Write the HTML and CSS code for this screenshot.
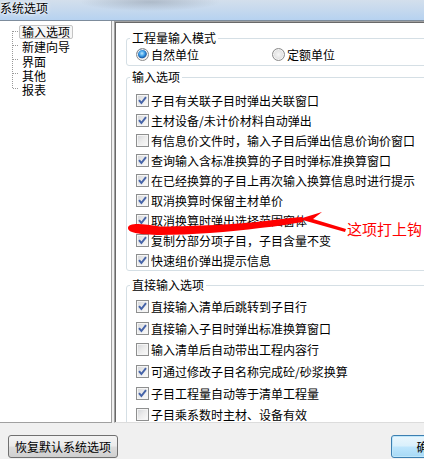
FILE: index.html
```html
<!DOCTYPE html>
<html lang="zh-CN">
<head>
    <meta charset="UTF-8">
    <title>系统选项</title>
    <link rel="stylesheet" href="styles.css">
</head>
<body>
    <div class="window">
        <div class="titlebar"><span class="title">系统选项</span></div>
        <div class="client">
            <div class="panes">
                <div class="tree">
                    <svg class="tree-lines" width="19" height="72" viewBox="0 0 19 72">
                        <g stroke="#9a9a9a" stroke-width="1" stroke-dasharray="1 1">
                            <line x1="12.5" y1="7" x2="12.5" y2="65"/>
                            <line x1="13" y1="7.5" x2="19" y2="7.5"/>
                            <line x1="13" y1="21.5" x2="19" y2="21.5"/>
                            <line x1="13" y1="35.5" x2="19" y2="35.5"/>
                            <line x1="13" y1="49.5" x2="19" y2="49.5"/>
                            <line x1="13" y1="64.5" x2="19" y2="64.5"/>
                        </g>
                    </svg>
                    <ul class="tree-list">
                        <li class="tree-item selected">输入选项</li>
                        <li class="tree-item">新建向导</li>
                        <li class="tree-item">界面</li>
                        <li class="tree-item">其他</li>
                        <li class="tree-item">报表</li>
                    </ul>
                </div>

                <div class="options">
                    <fieldset class="group">
                        <legend>工程量输入模式</legend>
                        <div class="radios">
                            <label class="radio-item"><span class="radio on"></span>自然单位</label>
                            <label class="radio-item"><span class="radio"></span>定额单位</label>
                        </div>
                    </fieldset>

                    <fieldset class="group group-input">
                        <legend>输入选项</legend>
                        <label class="opt"><span class="check"><svg viewBox="0 0 11 11"><path d="M2 5.2 L4.4 8 L9 2.2"/></svg></span>子目有关联子目时弹出关联窗口</label>
                        <label class="opt"><span class="check"><svg viewBox="0 0 11 11"><path d="M2 5.2 L4.4 8 L9 2.2"/></svg></span>主材设备/未计价材料自动弹出</label>
                        <label class="opt"><span class="check"></span>有信息价文件时，输入子目后弹出信息价询价窗口</label>
                        <label class="opt"><span class="check"><svg viewBox="0 0 11 11"><path d="M2 5.2 L4.4 8 L9 2.2"/></svg></span>查询输入含标准换算的子目时弹标准换算窗口</label>
                        <label class="opt"><span class="check"><svg viewBox="0 0 11 11"><path d="M2 5.2 L4.4 8 L9 2.2"/></svg></span>在已经换算的子目上再次输入换算信息时进行提示</label>
                        <label class="opt"><span class="check"><svg viewBox="0 0 11 11"><path d="M2 5.2 L4.4 8 L9 2.2"/></svg></span>取消换算时保留主材单价</label>
                        <label class="opt"><span class="check"><svg viewBox="0 0 11 11"><path d="M2 5.2 L4.4 8 L9 2.2"/></svg></span>取消换算时弹出选择范围窗体</label>
                        <label class="opt"><span class="check"><svg viewBox="0 0 11 11"><path d="M2 5.2 L4.4 8 L9 2.2"/></svg></span>复制分部分项子目，子目含量不变</label>
                        <label class="opt"><span class="check"><svg viewBox="0 0 11 11"><path d="M2 5.2 L4.4 8 L9 2.2"/></svg></span>快速组价弹出提示信息</label>
                    </fieldset>

                    <fieldset class="group group-direct">
                        <legend>直接输入选项</legend>
                        <label class="opt"><span class="check"><svg viewBox="0 0 11 11"><path d="M2 5.2 L4.4 8 L9 2.2"/></svg></span>直接输入清单后跳转到子目行</label>
                        <label class="opt"><span class="check"><svg viewBox="0 0 11 11"><path d="M2 5.2 L4.4 8 L9 2.2"/></svg></span>直接输入子目时弹出标准换算窗口</label>
                        <label class="opt"><span class="check"></span>输入清单后自动带出工程内容行</label>
                        <label class="opt"><span class="check"><svg viewBox="0 0 11 11"><path d="M2 5.2 L4.4 8 L9 2.2"/></svg></span>可通过修改子目名称完成砼/砂浆换算</label>
                        <label class="opt"><span class="check"><svg viewBox="0 0 11 11"><path d="M2 5.2 L4.4 8 L9 2.2"/></svg></span>子目工程量自动等于清单工程量</label>
                        <label class="opt"><span class="check"></span>子目乘系数时主材、设备有效</label>
                    </fieldset>
                </div>
            </div>

            <div class="footer">
                <button class="btn">恢复默认系统选项</button>
                <button class="btn btn-default">确定</button>
            </div>
        </div>

        <!-- red hand-drawn note over the dialog -->
        <svg class="annotation" width="424" height="459" viewBox="0 0 424 459">
            <path fill="#f00" d="M128,228 C128,223 140,223 160,226.5 C185,226.5 230,225 260,221.5 C280,219.5 292,217.5 302,217 L303,222 C285,225 272,227 260,228 C230,232 190,235 160,235 C140,234.5 128,233 128,228 Z"/>
            <path fill="#f00" d="M299,219 L322,212 L313,219 L346,229 L345,232 Z"/>
        </svg>
        <span class="note">这项打上钩</span>
    </div>
</body>
</html>
```

FILE: styles.css
```css
html, body {
    margin: 0;
    overflow: hidden;
}

body {
    width: 424px;
    height: 459px;
    background: #f0f0f0;
    font-family: "Noto Sans CJK SC", "Liberation Sans", sans-serif;
    font-size: 12px;
    color: #000;
}

.window {
    position: relative;
    width: 480px;
    height: 459px;
}

.titlebar {
    height: 20px;
    border-bottom: 1px solid #7d8c9c;
    background:
        radial-gradient(ellipse 70px 9px at 150px 2px, rgba(110, 120, 135, 0.35), transparent),
        linear-gradient(180deg, #d3dfec 0%, #c4d8ee 55%, #b6d2f0 100%);
}

.title {
    display: block;
    line-height: 16px;
    text-shadow: 0 0 5px #fff, 0 0 3px #fff;
}

.client {
    display: flex;
    flex-direction: column;
}

.panes {
    display: flex;
    height: 402px;
}

/* left tree */
.tree {
    display: flex;
    align-items: flex-start;
    width: 111px;
    padding-top: 3px;
    background: #fff;
    border-right: 1px solid #a0a0a0;
    border-bottom: 1px solid #a0a0a0;
}

.tree-lines {
    flex: none;
}

.tree-list {
    list-style: none;
    margin: 0;
    padding: 0;
}

.tree-item {
    height: 14.25px;
    line-height: 14px;
    padding-left: 3px;
    white-space: nowrap;
}

.tree-item.selected {
    height: 12.25px;
    line-height: 12px;
    padding: 0 2px;
    margin-top: 1px;
    margin-bottom: 1px;
    border: 1px solid #c4c4c4;
    border-radius: 2px;
    background: #f6f6f6;
}

/* right options panel */
.options {
    flex: 1;
    margin-left: 2px;
    padding: 9px 0 0 11px;
    background: #fff;
    border-top: 1px solid #a0a0a0;
    border-left: 1px solid #a0a0a0;
    border-bottom: 1px solid #dcdcdc;
    box-shadow: inset 1px 1px 0 #696969;
    overflow: hidden;
}

.group {
    margin: 0;
    padding: 0 0 0 3px;
    border: 1px solid #d5dfe5;
    border-radius: 3px;
}

.group legend {
    padding: 0 2px;
    line-height: 14px;
}

.group + .group {
    margin-top: 4px;
}

.group.group-direct {
    margin-top: 7px;
    padding-top: 4px;
}

.group-input {
    padding-top: 6px;
}

.radios {
    display: flex;
    height: 16px;
    align-items: center;
    padding: 1px 0 3px 6px;
}

.radio-item {
    display: flex;
    align-items: center;
    gap: 2px;
    width: 136px;
}

.radio {
    width: 11px;
    height: 11px;
    border: 1px solid #8b8b8b;
    border-radius: 50%;
    background: radial-gradient(circle at 50% 50%, #f6f6f6 0%, #dedede 70%, #cfcfcf 100%);
    box-shadow: inset 0 0 0 1px #f4f4f4;
}

.radio.on {
    background: radial-gradient(circle at 45% 40%, #bde9ff 0%, #3d9ee6 30%, #1a5da8 50%, #e8e8e8 60%, #f4f4f4 100%);
}

.opt {
    display: flex;
    align-items: center;
    gap: 2px;
    height: 20px;
    padding-left: 6px;
    white-space: nowrap;
}

.group-direct .opt {
    height: 21.6px;
}

.check {
    flex: none;
    width: 11px;
    height: 11px;
    border: 1px solid #8e8f8f;
    background: linear-gradient(135deg, #d2d4d8 0%, #ececec 50%, #fbfbfb 100%);
    box-shadow: inset 0 0 0 1px #f5f5f5;
}

.check svg {
    display: block;
    width: 11px;
    height: 11px;
    fill: none;
    stroke: #4563a8;
    stroke-width: 2;
}

/* bottom buttons */
.footer {
    display: flex;
    padding: 12px 0 0 8px;
}

.btn {
    width: 110px;
    height: 23px;
    padding: 0;
    border: 1px solid #707070;
    border-radius: 3px;
    background: linear-gradient(180deg, #f3f3f3 0%, #ebebeb 48%, #dddddd 52%, #cfcfcf 100%);
    font-family: inherit;
    font-size: 12px;
    color: #000;
}

.btn-default {
    width: 75px;
    margin-left: 273px;
    border-color: #3c7fb1;
    background: linear-gradient(180deg, #eaf6fd 0%, #d9f0fc 48%, #bee6fd 52%, #a7d9f5 100%);
    box-shadow: inset 0 0 0 1px #bfe7fb;
}

/* annotation overlay */
.annotation {
    position: absolute;
    top: 0;
    left: 0;
    pointer-events: none;
}

.note {
    position: absolute;
    left: 347px;
    top: 220px;
    font-size: 15px;
    line-height: 18px;
    color: #f00;
    white-space: nowrap;
}
```
